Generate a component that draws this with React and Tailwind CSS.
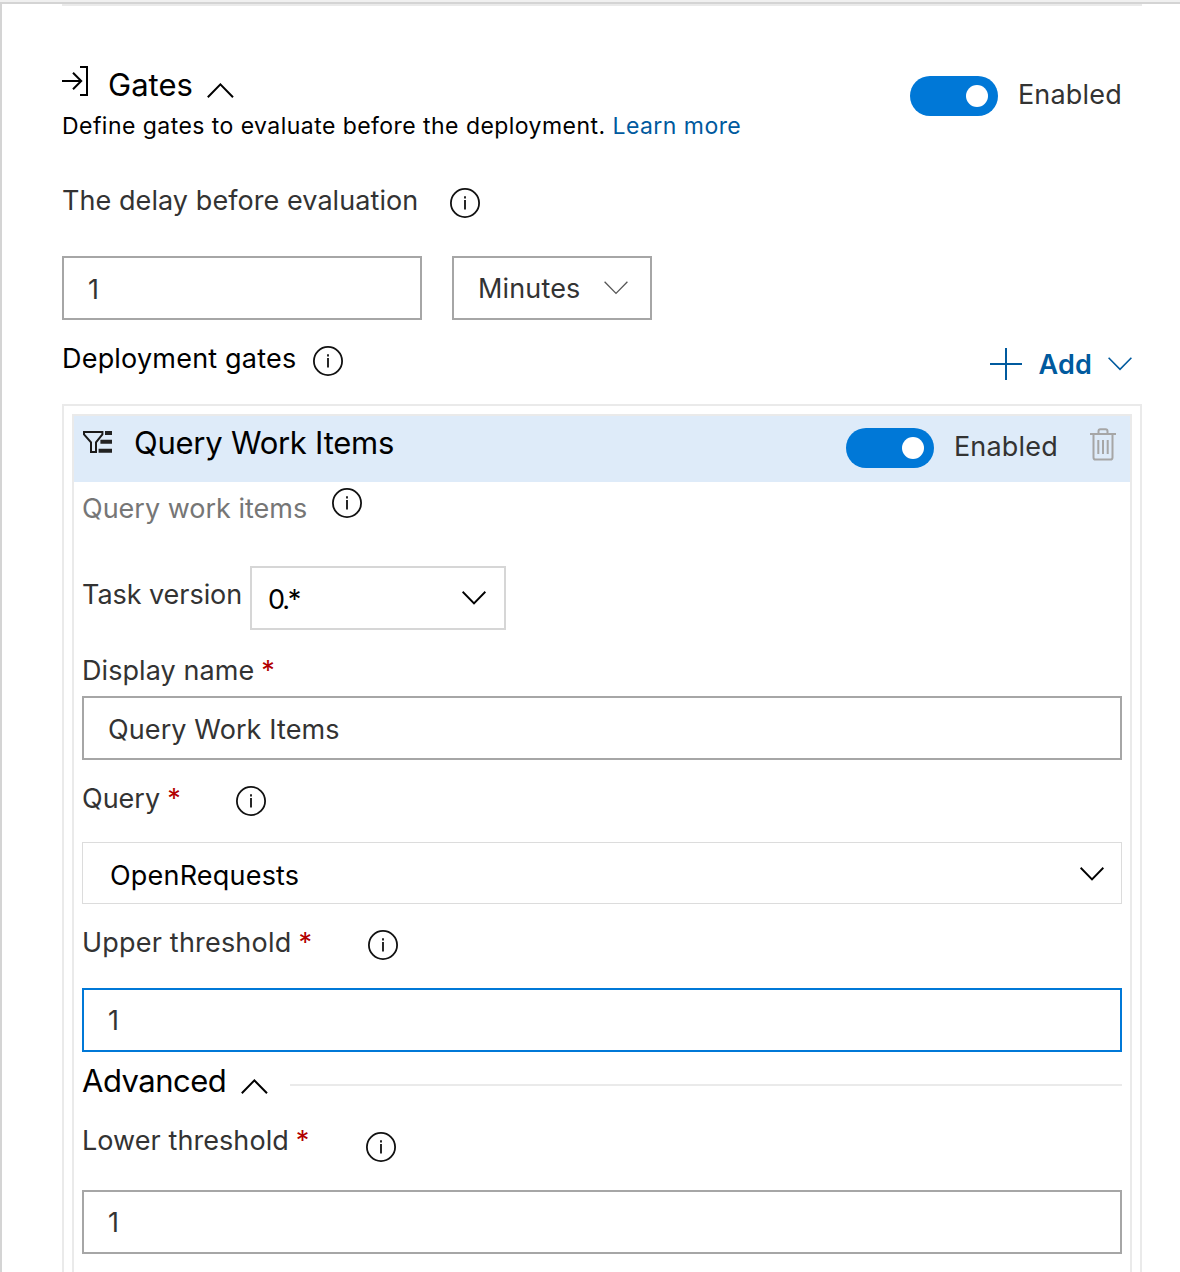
import React, { useState } from 'react';

const ChevronUp = ({ className = '' }) => (
    <svg className={className} width="28" height="16" viewBox="0 0 28 16" fill="none" stroke="currentColor" strokeWidth="2">
        <path d="M0.8 14.2 L13.4 1.4 L26 14.2" />
    </svg>
);

const ChevronDown = ({ className = '', weight = 2 }) => (
    <svg className={className} width="24" height="14" viewBox="0 0 24 14" fill="none" stroke="currentColor" strokeWidth={weight}>
        <path d="M0.6 0.8 L12 12.4 L23.4 0.8" />
    </svg>
);

const InfoIcon = ({ className = '' }) => (
    <svg className={`shrink-0 text-[#111111] ${className}`} width="30" height="30" viewBox="0 0 30 30" fill="none" stroke="currentColor">
        <circle cx="15" cy="15" r="14.1" strokeWidth="1.8" />
        <path d="M15 12v9.6M15 8.2v2.2" strokeWidth="1.8" />
    </svg>
);

const GateIcon = ({ className = '' }) => (
    <svg className={className} width="28" height="32" viewBox="0 0 28 32" fill="none" stroke="#000" strokeWidth="2">
        <path d="M0 16h19M11 7.8L19.2 16L11 24.2" />
        <path d="M18 2h7v28h-7" />
    </svg>
);

const QueryIcon = ({ className = '' }) => (
    <svg className={className} width="30" height="24" viewBox="0 0 30 24" fill="none" stroke="#1b1a19" strokeWidth="2">
        <path d="M1 2h18.4v2.4L13 12.4V22H8V12.4L1 4.4z" />
        <path d="M22 3h7M17.4 11.7h11.6M15.6 20.8h13.4" stroke="#222" strokeWidth="4" />
    </svg>
);

const TrashIcon = ({ className = '' }) => (
    <svg className={className} width="26" height="33" viewBox="0 0 26 33" fill="none" stroke="#a6a6a6" strokeWidth="2">
        <path d="M0 6h26M8.5 6V3.2Q8.5 1.3 10.4 1.3H15.6Q17.5 1.3 17.5 3.2V6" />
        <path d="M3.5 6V29.5Q3.5 31.6 5.5 31.6H20.5Q22.5 31.6 22.5 29.5V6" />
        <path d="M8.3 12v14M13 12v14M17.7 12v14" />
    </svg>
);

const Toggle = ({ className = '' }) => {
    const [on, setOn] = useState(true);

    return (
        <button
            type="button"
            role="switch"
            aria-checked={on}
            onClick={() => setOn(!on)}
            className={`flex h-10 w-[88px] shrink-0 items-center rounded-full px-2.5 ${on ? 'justify-end bg-[#0078d7]' : 'justify-start bg-[#a6a6a6]'} ${className}`}
        >
            <span className="h-[22px] w-[22px] rounded-full bg-white" />
        </button>
    );
};

const Required = () => <span className="ml-[7px] text-[#b20000]">*</span>;

const TextBox = ({ value, className = '' }) => (
    <input
        type="text"
        defaultValue={value}
        className={`block h-16 border-2 bg-white px-6 text-[27px] tracking-[0.1px] text-[#333333] outline-none ${className}`}
    />
);

const App = () => {
    return (
        <div className="flex h-[1272px] w-[1180px] flex-col overflow-hidden bg-white font-['Inter',sans-serif] text-[27px] leading-[38px] tracking-[0.07px] whitespace-nowrap text-[#333333]">
            <div className="h-1 shrink-0 border-b-2 border-[#d4d4d4] bg-[#f0f0f0]" />
            <div className="flex grow flex-col border-l-2 border-[#d4d4d4] pr-[38px] pl-[60px]">
                <div className="h-0.5 shrink-0 bg-[#eaeaea]" />

                {/* Gates header */}
                <div className="flex h-[168px] shrink-0 items-start justify-between leading-9">
                    <div className="pt-[59px]">
                        <div className="flex h-[46px] items-start text-black">
                            <GateIcon />
                            <h2 className="ml-[18px] pt-0.5 text-[31px] tracking-[0px]">Gates</h2>
                            <ChevronUp className="mt-[18px] ml-3.5" />
                        </div>
                        <p className="-mt-[3px] text-[23px] tracking-[0.45px] text-black">
                            Define gates to evaluate before the deployment.{' '}
                            <a href="#learn" className="text-[#005a9e]">Learn more</a>
                        </p>
                    </div>
                    <div className="flex items-start pt-[70px] pr-5">
                        <Toggle />
                        <span className="ml-5 pt-px tracking-[0.2px]">Enabled</span>
                    </div>
                </div>

                {/* Delay */}
                <div className="flex h-[82px] shrink-0 items-start">
                    <span className="w-[388px] pt-2">The delay before evaluation</span>
                    <InfoIcon className="mt-3.5" />
                </div>
                <div className="flex shrink-0 gap-[30px]">
                    <TextBox value="1" className="w-[360px] border-[#a6a6a6] pt-0.5" />
                    <button type="button" className="flex h-16 w-[200px] items-center justify-between border-2 border-[#a6a6a6] pr-[22px] pl-6">
                        <span className="pt-0.5 tracking-[0.15px]">Minutes</span>
                        <ChevronDown weight={1.3} className="text-[#555555]" />
                    </button>
                </div>

                {/* Gates list */}
                <div className="flex h-[84px] shrink-0 items-start justify-between">
                    <div className="flex items-start pt-5 text-black">
                        <span className="w-[250.5px] tracking-[0.2px]">Deployment gates</span>
                        <InfoIcon className="mt-[6px]" />
                    </div>
                    <button type="button" className="mt-6 mr-2.5 flex items-center font-semibold text-[#005a9e]">
                        <svg width="32" height="32" viewBox="0 0 32 32" stroke="currentColor" strokeWidth="2">
                            <path d="M0 16h32M16 0v32" />
                        </svg>
                        <span className="ml-4 pt-0.5 tracking-[0.2px]">Add</span>
                        <ChevronDown weight={1.6} className="ml-4" />
                    </button>
                </div>

                <div className="flex grow flex-col border-2 border-b-0 border-[#eaeaea] px-2 pt-2">
                    <div className="flex grow flex-col border-2 border-b-0 border-[#eaeaea]">
                        <div className="flex h-[66px] shrink-0 items-start bg-[#deebf9] pr-[14px] pl-[9px]">
                            <QueryIcon className="mt-3.5" />
                            <h3 className="ml-[21px] pt-2 text-[31px] tracking-[-0.25px] text-black">Query Work Items</h3>
                            <Toggle className="mt-3 ml-auto" />
                            <span className="ml-5 pt-3 tracking-[0.2px]">Enabled</span>
                            <TrashIcon className="mt-3 ml-8" />
                        </div>

                        <div className="flex flex-col px-2">
                            <div className="flex h-[84px] shrink-0 items-start">
                                <span className="w-[250px] pt-2 tracking-[0px] text-[#767676]">Query work items</span>
                                <InfoIcon className="mt-1.5" />
                            </div>

                            <div className="flex h-[86px] shrink-0 items-start">
                                <span className="w-[168px] pt-2.5 tracking-[-0.05px]">Task version</span>
                                <button type="button" className="flex h-16 w-64 items-center justify-between border-2 border-[#d6d6d6] pr-[18.5px] pl-4 text-black">
                                    <span className="pt-1 tracking-[-2.2px]">0.*</span>
                                    <ChevronDown />
                                </button>
                            </div>

                            <label className="h-11 shrink-0">Display name<Required /></label>
                            <TextBox value="Query Work Items" className="w-full border-[#a6a6a6] pt-0.5" />

                            <div className="flex h-[82px] shrink-0 items-start pt-5">
                                <span className="w-[154px] tracking-[0px]">Query<Required /></span>
                                <InfoIcon className="mt-[6px]" />
                            </div>
                            <button type="button" className="flex h-[62px] shrink-0 items-center justify-between border border-[#dcdcdc] pr-[17px] pl-[27px] text-black">
                                <span className="pt-1.5 tracking-[0.2px]">OpenRequests</span>
                                <ChevronDown className="mt-0.5" />
                            </button>

                            <div className="flex h-[84px] shrink-0 items-start pt-5">
                                <span className="w-[286px] tracking-[0.2px]">Upper threshold<Required /></span>
                                <InfoIcon className="mt-[6px]" />
                            </div>
                            <TextBox value="1" className="w-full border-[#0078d7]" />

                            <div className="flex h-[70px] shrink-0 items-start pt-[11px] leading-9 text-black">
                                <h3 className="w-[143px] text-[31px] tracking-[-0.5px]">Advanced</h3>
                                <ChevronUp className="mt-4 ml-[15.5px]" />
                                <div className="mt-[21px] ml-[21.5px] h-0.5 grow bg-[#eaeaea]" />
                            </div>

                            <div className="flex h-[68px] shrink-0 items-start">
                                <span className="w-[283.5px]">Lower threshold<Required /></span>
                                <InfoIcon className="mt-2.5" />
                            </div>
                            <TextBox value="1" className="w-full border-[#a6a6a6]" />
                        </div>
                    </div>
                </div>
            </div>
        </div>
    );
};

export default App;
